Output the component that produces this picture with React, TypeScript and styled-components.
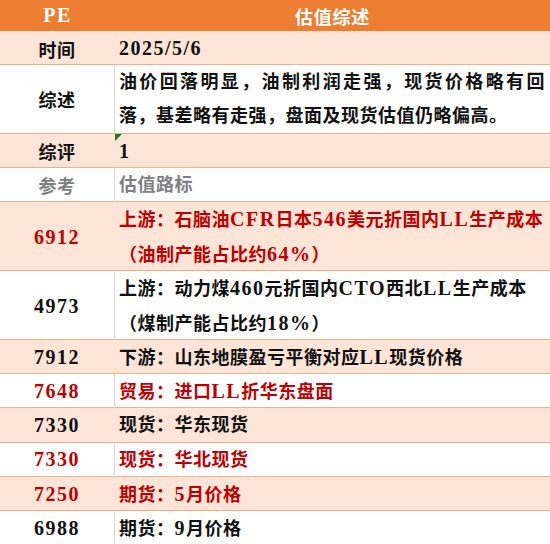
import React from "react";
import styled, { createGlobalStyle } from "styled-components";

const GlobalStyle = createGlobalStyle`
  html, body { margin: 0; padding: 0; background: #ffffff; }
  body { font-family: "Liberation Serif", "Noto Sans CJK SC", serif; }
`;

const SINGLE = 34.3;

type Tone = "black" | "red" | "gray";
const toneColor: Record<Tone, string> = {
  black: "#111111",
  red: "#C00000",
  gray: "#7F7F7F",
};

const Table = styled.div`
  width: 550px;
  display: flex;
  flex-direction: column;
  font-weight: 700;
`;

const Header = styled.div`
  display: grid;
  grid-template-columns: 115px 1fr;
  height: 31px;
  background: #ed7d31;
  color: #ffffff;
  font-size: 18px;
  letter-spacing: 0.75px;
`;

const HeaderCell = styled.div`
  display: flex;
  align-items: center;
  justify-content: center;
`;

const Row = styled.div<{ $lines: number; $pink: boolean }>`
  display: grid;
  grid-template-columns: 115px 1fr;
  box-sizing: border-box;
  height: ${(p) => p.$lines * SINGLE}px;
  background: ${(p) => (p.$pink ? "#FCE4D6" : "#FFFFFF")};
  border-bottom: 1px solid #f4b084;
  font-size: 18px;
  letter-spacing: 0.5px;
`;

const KeyCell = styled.div<{ $tone: Tone; $pink: boolean }>`
  display: flex;
  align-items: center;
  justify-content: center;
  color: ${(p) => toneColor[p.$tone]};
  box-sizing: border-box;
  border-right: 1px solid ${(p) => (p.$pink ? "transparent" : "#D9D9D9")};
`;

const ValueCell = styled.div<{ $tone: Tone }>`
  position: relative;
  display: flex;
  flex-direction: column;
  justify-content: center;
  padding: 0 5px 0 4px;
  color: ${(p) => toneColor[p.$tone]};
`;

const Line = styled.div<{ $justify?: boolean }>`
  line-height: 34px;
  white-space: nowrap;
  text-align: ${(p) => (p.$justify ? "justify" : "left")};
  text-align-last: ${(p) => (p.$justify ? "justify" : "auto")};
  text-justify: inter-character;
`;

const Latin = styled.span`
  font-family: "Liberation Serif", serif;
  font-size: 20px;
  letter-spacing: 1.5px;
`;

const CornerMark = styled.span`
  position: absolute;
  top: 0;
  left: 0;
  width: 0;
  height: 0;
  border-top: 7px solid #1e7b22;
  border-right: 7px solid transparent;
`;

function Mixed({ text }: { text: string }) {
  const parts = text.split(/([A-Za-z0-9%/.]+)/);
  return (
    <>
      {parts.map((p, i) =>
        /^[A-Za-z0-9%/.]+$/.test(p) ? <Latin key={i}>{p}</Latin> : <React.Fragment key={i}>{p}</React.Fragment>
      )}
    </>
  );
}

type RowData = {
  k: string;
  v: string[];
  pink: boolean;
  tone: Tone;
  keyTone?: Tone;
  justifyFirst?: boolean;
  mark?: boolean;
};

const rows: RowData[] = [
  { k: "时间", v: ["2025/5/6"], pink: true, tone: "black" },
  {
    k: "综述",
    v: ["油价回落明显，油制利润走强，现货价格略有回", "落，基差略有走强，盘面及现货估值仍略偏高。"],
    pink: false,
    tone: "black",
    justifyFirst: true,
  },
  { k: "综评", v: ["1"], pink: true, tone: "black", mark: true },
  { k: "参考", v: ["估值路标"], pink: false, tone: "gray" },
  {
    k: "6912",
    v: ["上游：石脑油CFR日本546美元折国内LL生产成本", "（油制产能占比约64%）"],
    pink: true,
    tone: "red",
  },
  {
    k: "4973",
    v: ["上游：动力煤460元折国内CTO西北LL生产成本", "（煤制产能占比约18%）"],
    pink: false,
    tone: "black",
  },
  { k: "7912", v: ["下游：山东地膜盈亏平衡对应LL现货价格"], pink: true, tone: "black" },
  { k: "7648", v: ["贸易：进口LL折华东盘面"], pink: false, tone: "red" },
  { k: "7330", v: ["现货：华东现货"], pink: true, tone: "black" },
  { k: "7330", v: ["现货：华北现货"], pink: false, tone: "red" },
  { k: "7250", v: ["期货：5月价格"], pink: true, tone: "red" },
  { k: "6988", v: ["期货：9月价格"], pink: false, tone: "black" },
];

export default function App() {
  return (
    <>
      <GlobalStyle />
      <Table>
        <Header>
          <HeaderCell>
            <Mixed text="PE" />
          </HeaderCell>
          <HeaderCell>估值综述</HeaderCell>
        </Header>
        {rows.map((r, i) => (
          <Row key={i} $lines={r.v.length} $pink={r.pink}>
            <KeyCell $tone={r.keyTone ?? r.tone} $pink={r.pink}>
              <Mixed text={r.k} />
            </KeyCell>
            <ValueCell $tone={r.tone}>
              {r.mark && <CornerMark />}
              {r.v.map((line, j) => (
                <Line key={j} $justify={r.justifyFirst && j === 0}>
                  <Mixed text={line} />
                </Line>
              ))}
            </ValueCell>
          </Row>
        ))}
      </Table>
    </>
  );
}
